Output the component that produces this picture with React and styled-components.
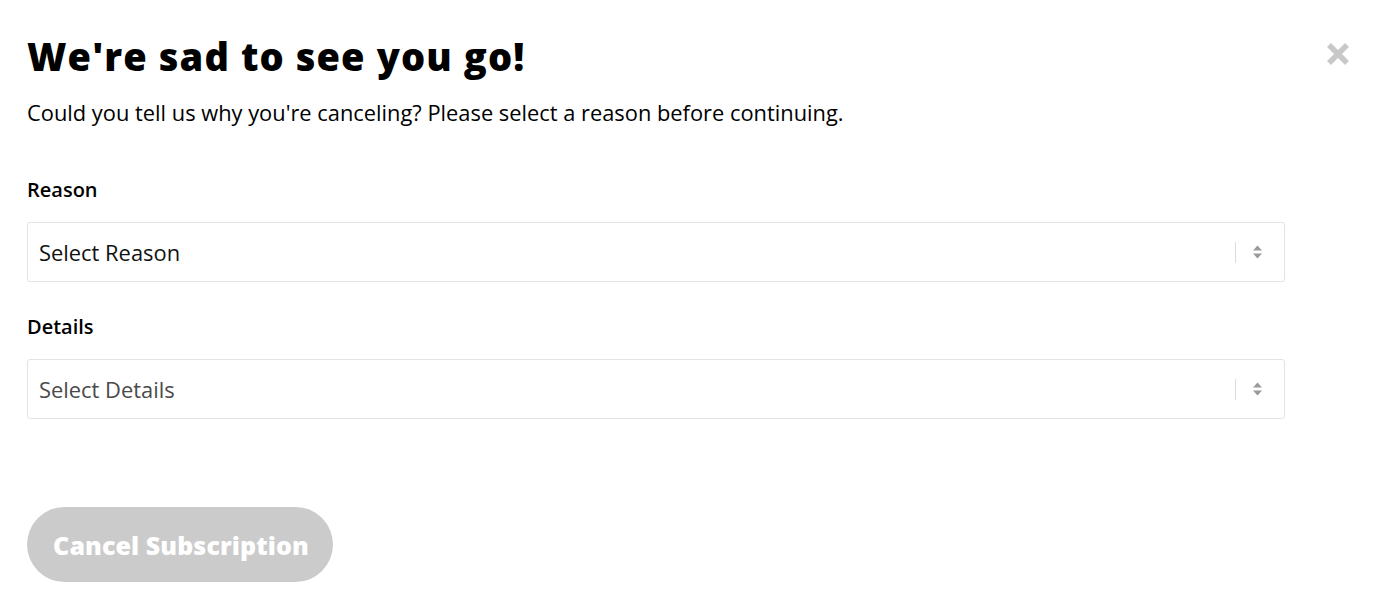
import React from "react";
import styled, { createGlobalStyle } from "styled-components";

const Global = createGlobalStyle`
  html, body { margin: 0; padding: 0; background: #fff; }
  body { font-family: "Open Sans", "Noto Sans", sans-serif; color: #000; }
`;

const Page = styled.div`
  position: relative;
  padding: 30px 101px 0 27px;
`;

const Title = styled.h1`
  margin: 0;
  font-size: 38px;
  font-weight: 800;
  letter-spacing: 1.1px;
  line-height: 52px;
`;

const Lead = styled.p`
  margin: 16px 0 0 0;
  font-size: 21.85px;
  line-height: 30px;
`;

const Close = styled.button`
  position: absolute;
  top: 40px;
  right: 34px;
  width: 28px;
  height: 28px;
  border: 0;
  padding: 0;
  background: transparent;
  display: flex;
  align-items: center;
  justify-content: center;
`;

const Field = styled.div`
  display: flex;
  flex-direction: column;
  margin-top: ${(p) => p.$top}px;
`;

const Label = styled.label`
  font-size: 20px;
  font-weight: 600;
  line-height: 28px;
  margin-bottom: 18px;
`;

const SelectBox = styled.div`
  height: 60px;
  border: 1px solid #e3e3e3;
  border-radius: 3px;
  display: flex;
  align-items: center;
  padding: 0 21px 0 11px;
  box-sizing: border-box;
`;

const SelectText = styled.span`
  flex: 1;
  font-size: 21.9px;
  color: ${(p) => (p.$muted ? "#4a4a4a" : "#111")};
`;

const Sep = styled.span`
  width: 1px;
  height: 21px;
  background: #dcdcdc;
  margin-right: 16px;
`;

const Button = styled.button`
  margin-top: 88px;
  width: 306px;
  height: 75px;
  border: 0;
  border-radius: 38px;
  background: #cbcbcb;
  color: #fff;
  font-family: "Open Sans", sans-serif;
  font-size: 25px;
  font-weight: 800;
  letter-spacing: 0.1px;
  padding-left: 8px;
`;

const Arrows = () => (
  <svg width="11" height="18" viewBox="0 0 11 18">
    <path d="M1 7.5 L5.5 2.5 L10 7.5 Z" fill="#9a9a9a" />
    <path d="M1 10.5 L5.5 15.5 L10 10.5 Z" fill="#9a9a9a" />
  </svg>
);

export default function App() {
  return (
    <>
      <Global />
      <Page>
        <Title>We're sad to see you go!</Title>
        <Lead>Could you tell us why you're canceling? Please select a reason before continuing.</Lead>
        <Close aria-label="Close">
          <svg width="24" height="24" viewBox="0 0 24 24">
            <path d="M3 3 L21 21 M21 3 L3 21" stroke="#c8c8c8" strokeWidth="5.5" />
          </svg>
        </Close>
        <Field $top={48}>
          <Label>Reason</Label>
          <SelectBox>
            <SelectText>Select Reason</SelectText>
            <Sep />
            <Arrows />
          </SelectBox>
        </Field>
        <Field $top={31}>
          <Label>Details</Label>
          <SelectBox>
            <SelectText $muted>Select Details</SelectText>
            <Sep />
            <Arrows />
          </SelectBox>
        </Field>
        <Button>Cancel Subscription</Button>
      </Page>
    </>
  );
}
